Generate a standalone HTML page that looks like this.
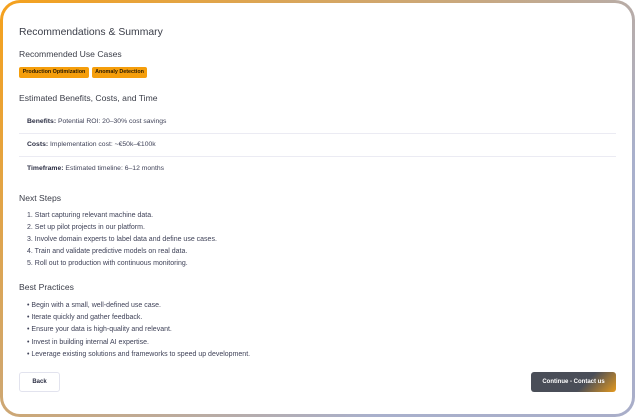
<!DOCTYPE html>
<html><head><style>
*{margin:0;padding:0;box-sizing:border-box}
body{width:635px;height:418px;background:#fff;font-family:"Liberation Sans",sans-serif;position:relative;overflow:hidden}
.frame{position:absolute;left:0;top:0;width:635px;height:417px;border-radius:20px;background:linear-gradient(135deg,#f5a11c 0%,#c8a880 45%,#a9b0cc 75%,#a9aec9 100%)}
.inner{position:absolute;left:3px;top:3px;right:3px;bottom:3px;border-radius:17px;background:#fff}
.t{position:absolute;white-space:nowrap;color:#3a3d48}
.h1{font-size:10.4px;left:19px;top:27px}
.h2{font-size:8.6px;left:19px}
.tag{position:absolute;top:67px;height:11px;background:#f59e0b;border-radius:2px;font-size:5.4px;font-weight:bold;color:#2a1a00;line-height:11px;padding:0 3px;text-align:center}
.row{font-size:6.8px;left:27px;color:#3f4258}
.row b{color:#2c2f44}
.div{position:absolute;left:19px;width:597px;height:1px;background:#ebebf3}
.li{font-size:7px;left:27px;color:#3f4258}
.btn{position:absolute;top:372px;height:20px;border-radius:3px;font-size:6px;font-weight:bold;text-align:center;line-height:20px}
</style></head><body>
<div class="frame"><div class="inner"></div></div>
<div class="t h1">Recommendations &amp; Summary</div>
<div class="t h2" style="top:49px">Recommended Use Cases</div>
<div class="tag" style="left:19px;width:70px">Production Optimization</div>
<div class="tag" style="left:92px;width:55px">Anomaly Detection</div>
<div class="t h2" style="top:93px">Estimated Benefits, Costs, and Time</div>
<div class="t row" style="top:118px"><b>Benefits:</b> Potential ROI: 20–30% cost savings</div>
<div class="div" style="top:133px"></div>
<div class="t row" style="top:141px"><b>Costs:</b> Implementation cost: ~€50k–€100k</div>
<div class="div" style="top:156px"></div>
<div class="t row" style="top:165px"><b>Timeframe:</b> Estimated timeline: 6–12 months</div>
<div class="t h2" style="top:193px">Next Steps</div>
<div class="t li" style="top:212px">1. Start capturing relevant machine data.</div>
<div class="t li" style="top:224px">2. Set up pilot projects in our platform.</div>
<div class="t li" style="top:236px">3. Involve domain experts to label data and define use cases.</div>
<div class="t li" style="top:248px">4. Train and validate predictive models on real data.</div>
<div class="t li" style="top:260px">5. Roll out to production with continuous monitoring.</div>
<div class="t h2" style="top:282px">Best Practices</div>
<div class="t li" style="top:302px">• Begin with a small, well-defined use case.</div>
<div class="t li" style="top:314px">• Iterate quickly and gather feedback.</div>
<div class="t li" style="top:326px">• Ensure your data is high-quality and relevant.</div>
<div class="t li" style="top:339px">• Invest in building internal AI expertise.</div>
<div class="t li" style="top:351px">• Leverage existing solutions and frameworks to speed up development.</div>
<div class="btn" style="left:19px;width:41px;border:1px solid #e2e3ee;color:#2c2f44;line-height:18px">Back</div>
<div class="btn" style="left:531px;width:85px;background:linear-gradient(135deg,#4a4e58 0%,#4a4e58 62%,#e59a1e 100%);color:#fff">Continue - Contact us</div>
</body></html>
